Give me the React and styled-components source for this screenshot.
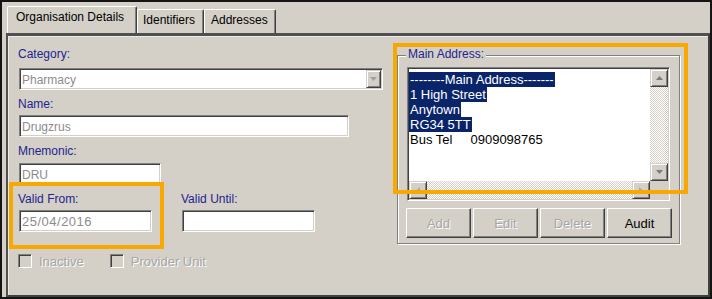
import React from 'react';
import styled, { createGlobalStyle } from 'styled-components';

const FACE = '#d4d0c8';
const LABEL = '#23238f';
const ORANGE = '#f9a800';

const GlobalStyle = createGlobalStyle`
  html, body { margin: 0; padding: 0; background: ${FACE}; }
  body { font-family: 'Liberation Sans', Arial, sans-serif; }
  *, *::before, *::after { box-sizing: border-box; }
`;

const Frame = styled.div`
  position: relative;
  width: 712px;
  height: 299px;
  background: ${FACE};
  border: 2px solid #141414;
  padding-left: 4px;
  display: flex;
  flex-direction: column;
  overflow: hidden;
`;

const TabStrip = styled.div`
  display: flex;
  align-items: flex-end;
  height: 31px;
  flex-shrink: 0;
  padding-left: 1px;
`;

const Tab = styled.div`
  width: ${p => p.$w}px;
  height: ${p => (p.$active ? 27 : 24)}px;
  padding: 3px 0 0 ${p => p.$pl}px;
  font-size: 12px;
  line-height: 14px;
  color: #000;
  white-space: nowrap;
  background: ${FACE};
  border-top: 1px solid #fff;
  border-left: 1px solid #fff;
  border-right: 1px solid #404040;
  box-shadow: inset -1px 0 #808080;
  border-radius: 2px 2px 0 0;
`;

const Panel = styled.div`
  flex: 1;
  display: flex;
  align-items: flex-start;
  border-top: 3px solid #505050;
  border-left: 2px solid #505050;
  border-right: 2px solid #404040;
  border-bottom: 2px solid #404040;
  box-shadow: inset 1px 1px #ececec;
  padding: 11px 0 0 10px;
`;

const LeftCol = styled.div`
  width: 379px;
  display: flex;
  flex-direction: column;
  align-items: flex-start;
`;

const Label = styled.div`
  margin-top: ${p => p.$mt || 0}px;
  font-size: 12px;
  line-height: 14px;
  color: ${LABEL};
  white-space: nowrap;
`;

const Field = styled.div`
  margin-top: ${p => p.$mt || 0}px;
  margin-left: 1px;
  width: ${p => p.$w}px;
  height: 22px;
  display: flex;
  align-items: center;
  padding: 0 1px 0 2px;
  background: #fff;
  border-top: 1px solid #808080;
  border-left: 1px solid #808080;
  border-bottom: 1px solid #fff;
  border-right: 1px solid #fff;
  box-shadow: inset 1px 1px #404040, inset -1px -1px ${FACE};
  font-size: ${p => p.$size || 12}px;
  letter-spacing: ${p => p.$ls || 0}px;
  color: #8c8c8c;
  white-space: nowrap;
`;

const FieldText = styled.span`
  flex: 1;
  padding-top: 1px;
`;

const Raised = styled.div`
  background: ${FACE};
  border-top: 1px solid ${FACE};
  border-left: 1px solid ${FACE};
  border-bottom: 1px solid #404040;
  border-right: 1px solid #404040;
  box-shadow: inset 1px 1px #fff, inset -1px -1px #808080;
  display: flex;
  align-items: center;
  justify-content: center;
  flex-shrink: 0;
`;

const DropButton = styled(Raised)`
  width: 15px;
  height: 18px;
`;

const Row = styled.div`
  margin-top: ${p => p.$mt || 0}px;
  display: flex;
  align-items: ${p => p.$align || 'flex-start'};
  gap: ${p => p.$gap || 0}px;
`;

const Col = styled.div`
  width: ${p => p.$w}px;
  display: flex;
  flex-direction: column;
  align-items: flex-start;
`;

const CheckItem = styled.div`
  display: flex;
  align-items: center;
  gap: 7px;
`;

const CheckBox = styled.div`
  width: 14px;
  height: 14px;
  background: ${FACE};
  border-top: 1px solid #808080;
  border-left: 1px solid #808080;
  border-bottom: 1px solid #fff;
  border-right: 1px solid #fff;
  box-shadow: inset 1px 1px #404040, inset -1px -1px ${FACE};
`;

const Disabled = styled.span`
  font-size: 13px;
  line-height: 15px;
  padding-top: 1px;
  color: #a6a6a6;
  text-shadow: 1px 1px #fff;
  white-space: nowrap;
`;

const GroupBox = styled.div`
  width: 283px;
  margin-top: 8px;
  border: 1px solid #808080;
  box-shadow: inset 1px 1px #fff, 1px 1px #fff;
  padding: 0 9px 5px 9px;
  display: flex;
  flex-direction: column;
  align-items: flex-start;
`;

const Legend = styled.div`
  margin: -9px 0 0 -1px;
  padding: 0 2px;
  background: ${FACE};
  font-size: 12px;
  line-height: 14px;
  color: ${LABEL};
  white-space: nowrap;
`;

const ListBox = styled.div`
  margin-top: 6px;
  width: 263px;
  height: 134px;
  background: #fff;
  border-top: 1px solid #808080;
  border-left: 1px solid #808080;
  border-bottom: 1px solid #fff;
  border-right: 1px solid #fff;
  box-shadow: inset 1px 1px #404040, inset -1px -1px ${FACE};
  padding: 1px;
  display: grid;
  grid-template-columns: 1fr 18px;
  grid-template-rows: 1fr 18px;
`;

const ListText = styled.div`
  padding-top: 3px;
  font-size: 13px;
  line-height: 15px;
  color: #000;
  overflow: hidden;
  white-space: pre;
`;

const Line = styled.div`
  height: 15px;
  padding-left: ${p => (p.$sel ? 0 : 1)}px;
`;

const Sel = styled.span`
  display: inline-block;
  height: 15px;
  padding: 0 1px;
  background: #0a246a;
  color: #fff;
`;

const Scroll = styled.div`
  display: flex;
  flex-direction: ${p => (p.$vertical ? 'column' : 'row')};
`;

const ScrollBtn = styled(Raised)`
  width: 18px;
  height: 18px;
`;

const Track = styled.div`
  flex: 1;
  background-color: #fff;
  background-image: repeating-conic-gradient(${FACE} 0 25%, #fff 0 50%);
  background-size: 2px 2px;
`;

const Corner = styled.div`
  background: ${FACE};
`;

const ButtonRow = styled.div`
  margin: 7px 0 0 -1px;
  display: flex;
  gap: 2px;
`;

const Button = styled.div`
  width: 65px;
  height: 30px;
  background: ${FACE};
  border-top: 1px solid #fff;
  border-left: 1px solid #fff;
  border-bottom: 1px solid #404040;
  border-right: 1px solid #404040;
  box-shadow: inset -1px -1px #808080;
  display: flex;
  align-items: center;
  justify-content: center;
  font-size: 13px;
  color: ${p => (p.$disabled ? '#a6a6a6' : '#000')};
  text-shadow: ${p => (p.$disabled ? '1px 1px #fff' : 'none')};
`;

const Annotation = styled.div`
  position: absolute;
  left: ${p => p.$x}px;
  top: ${p => p.$y}px;
  width: ${p => p.$w}px;
  height: ${p => p.$h}px;
  border: 4px solid ${ORANGE};
  pointer-events: none;
`;

const ArrowSvg = styled.svg`
  display: block;
  fill: ${p => p.$color};
`;

function Arrow({ dir, color = '#7a7a7a' }) {
  const pts = {
    up: '0,4 7,4 3.5,0',
    down: '0,0 7,0 3.5,4',
    left: '4,0 4,7 0,3.5',
    right: '0,0 0,7 4,3.5',
  }[dir];
  const horiz = dir === 'left' || dir === 'right';
  return (
    <ArrowSvg $color={color} width={horiz ? 4 : 7} height={horiz ? 7 : 4} viewBox={horiz ? '0 0 4 7' : '0 0 7 4'}>
      <polygon points={pts} />
    </ArrowSvg>
  );
}

export default function App() {
  return (
    <>
      <GlobalStyle />
      <Frame>
        <TabStrip>
          <Tab $active $w={130} $pl={8}>Organisation Details</Tab>
          <Tab $w={67} $pl={5}>Identifiers</Tab>
          <Tab $w={72} $pl={6}>Addresses</Tab>
        </TabStrip>
        <Panel>
          <LeftCol>
            <Label>Category:</Label>
            <Field $mt={7} $w={364}>
              <FieldText>Pharmacy</FieldText>
              <DropButton>
                <Arrow dir="down" color="#a0a0a0" />
              </DropButton>
            </Field>
            <Label $mt={7}>Name:</Label>
            <Field $mt={4} $w={330}>
              <FieldText>Drugzrus</FieldText>
            </Field>
            <Label $mt={7}>Mnemonic:</Label>
            <Field $mt={5} $w={142}>
              <FieldText>DRU</FieldText>
            </Field>
            <Row $mt={7}>
              <Col $w={163}>
                <Label>Valid From:</Label>
                <Field $mt={4} $w={133} $size={13} $ls={0.5}>
                  <FieldText>25/04/2016</FieldText>
                </Field>
              </Col>
              <Col $w={140}>
                <Label>Valid Until:</Label>
                <Field $mt={4} $w={133}>
                  <FieldText />
                </Field>
              </Col>
            </Row>
            <Row $mt={21} $align="center" $gap={26}>
              <CheckItem>
                <CheckBox />
                <Disabled>Inactive</Disabled>
              </CheckItem>
              <CheckItem>
                <CheckBox />
                <Disabled>Provider Unit</Disabled>
              </CheckItem>
            </Row>
          </LeftCol>

          <GroupBox>
            <Legend>Main Address:</Legend>
            <ListBox>
              <ListText>
                <Line $sel><Sel>--------Main Address-------</Sel></Line>
                <Line $sel><Sel>1 High Street</Sel></Line>
                <Line $sel><Sel>Anytown</Sel></Line>
                <Line $sel><Sel>RG34 5TT</Sel></Line>
                <Line>{'Bus Tel     0909098765'}</Line>
              </ListText>
              <Scroll $vertical>
                <ScrollBtn><Arrow dir="up" /></ScrollBtn>
                <Track />
                <ScrollBtn><Arrow dir="down" /></ScrollBtn>
              </Scroll>
              <Scroll>
                <ScrollBtn><Arrow dir="left" color="#a8a8a8" /></ScrollBtn>
                <Track />
                <ScrollBtn><Arrow dir="right" color="#a8a8a8" /></ScrollBtn>
              </Scroll>
              <Corner />
            </ListBox>
            <ButtonRow>
              <Button $disabled>Add</Button>
              <Button $disabled>Edit</Button>
              <Button $disabled>Delete</Button>
              <Button>Audit</Button>
            </ButtonRow>
          </GroupBox>
        </Panel>
        <Annotation $x={7} $y={180} $w={155} $h={67} />
        <Annotation $x={391} $y={41} $w={295} $h={151} />
      </Frame>
    </>
  );
}
